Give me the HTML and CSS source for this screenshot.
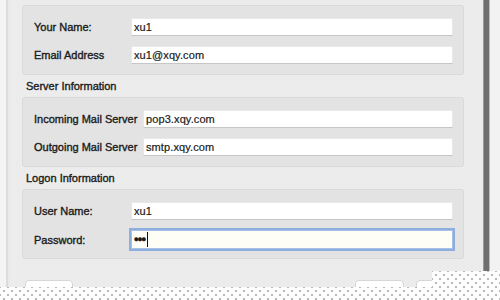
FILE: index.html
```html
<!DOCTYPE html>
<html>
<head>
  <meta charset="UTF-8">
  <title>Account Settings</title>
  <link rel="stylesheet" href="styles.css">
</head>
<body>
  <div class="screen">
    <div class="window">
      <div class="content">
        <h2 class="group-title">User Information</h2>
        <div class="group">
          <div class="row">
            <span class="label">Your Name:</span>
            <div class="field">xu1</div>
          </div>
          <div class="row">
            <span class="label">Email Address</span>
            <div class="field">xu1@xqy.com</div>
          </div>
        </div>

        <h2 class="group-title">Server Information</h2>
        <div class="group group-wide">
          <div class="row">
            <span class="label">Incoming Mail Server</span>
            <div class="field">pop3.xqy.com</div>
          </div>
          <div class="row">
            <span class="label">Outgoing Mail Server</span>
            <div class="field">smtp.xqy.com</div>
          </div>
        </div>

        <h2 class="group-title">Logon Information</h2>
        <div class="group">
          <div class="row">
            <span class="label">User Name:</span>
            <div class="field">xu1</div>
          </div>
          <div class="row">
            <span class="label">Password:</span>
            <div class="field field-focus">•••<span class="caret"></span></div>
          </div>
        </div>

        <div class="buttons">
          <button class="button">Save</button>
          <button class="button button-push">Close</button>
          <button class="button">Cancel</button>
        </div>
      </div>
    </div>
    <div class="edge"></div>
    <div class="dots dots-right"></div>
    <div class="dots dots-bottom"></div>
  </div>
</body>
</html>
```

FILE: styles.css
```css
html, body {
  margin: 0;
  padding: 0;
}

body {
  width: 500px;
  height: 300px;
  overflow: hidden;
  background: #ededed;
  font-family: "Liberation Sans", Arial, sans-serif;
  font-size: 11px;
  color: #1a1a1a;
}

.screen {
  position: relative;
  display: flex;
  width: 500px;
  height: 300px;
  overflow: hidden;
}

.window {
  width: 483px;
  flex: none;
  background: linear-gradient(to right, #f4f4f4 0 6px, #dcdcdc 6px 8px, #e9e9e9 8px 10px, #ececec 10px);
}

.content {
  margin-top: -17px;
  padding-left: 22px;
  width: 442px;
}

.group-title {
  margin: 0;
  height: 19px;
  line-height: 22px;
  padding-left: 4px;
  margin-bottom: 3px;
  font-size: 11px;
  font-weight: normal;
  -webkit-text-stroke: 0.35px #1a1a1a;
}

.group {
  display: flex;
  flex-direction: column;
  gap: 10px;
  padding: 12px 10px 12px 11px;
  background: #e3e3e3;
  border: 1px solid #dadada;
  border-radius: 3px;
  box-sizing: border-box;
  height: 70px;
}

.row {
  display: grid;
  grid-template-columns: 97px 1fr;
  align-items: center;
  height: 18px;
}

.group-wide .row {
  grid-template-columns: 109px 1fr;
}

.label {
  -webkit-text-stroke: 0.35px #1a1a1a;
  white-space: nowrap;
}

.field {
  height: 18px;
  line-height: 17px;
  box-sizing: border-box;
  padding-left: 2px;
  background: #fff;
  border: 1px solid #e8e8e8;
  border-bottom-color: #c6c6c6;
  letter-spacing: 0.1px;
  -webkit-text-stroke: 0.2px #1a1a1a;
}

.field-focus {
  display: flex;
  align-items: center;
  height: 19px;
  background: #fffef6;
  border-color: #a6c0e6;
  box-shadow: 0 0 0 2px #8eaedf;
  font-size: 13px;
  letter-spacing: -0.8px;
  -webkit-text-stroke: 0.5px #1a1a1a;
}

.caret {
  width: 1px;
  height: 15px;
  margin-left: 2px;
  background: #111;
}

.buttons {
  display: flex;
  gap: 12px;
  margin-top: 21px;
  padding-left: 3px;
}

.button {
  height: 21px;
  padding: 0;
  width: 48px;
  background: #fff;
  border: 1px solid #d6d6d6;
  border-radius: 4px;
  font-family: "Liberation Sans", Arial, sans-serif;
  font-size: 11px;
  color: #222;
}

.button-push {
  margin-left: auto;
  width: 49px;
}

.edge {
  width: 7px;
  height: 271px;
  flex: none;
  background: linear-gradient(to right, #9a9a9a 0 1px, #6f6f6f 1px 6px, #bdbdbd 6px);
}

.screen::after {
  content: "";
  flex: 1;
  background: #f2f2f2;
}

.dots {
  position: absolute;
  background-color: #fdfdfd;
  background-image:
    radial-gradient(circle, #a2a2a2 0.6px, transparent 1px),
    radial-gradient(circle, #a2a2a2 0.6px, transparent 1px);
  background-size: 8px 8px;
  background-position: 0 0, 4px 4px;
}

.dots-right {
  left: 432px;
  top: 271px;
  right: 0;
  bottom: 0;
}

.dots-bottom {
  left: 0;
  right: 0;
  top: 287px;
  bottom: 0;
}
```
